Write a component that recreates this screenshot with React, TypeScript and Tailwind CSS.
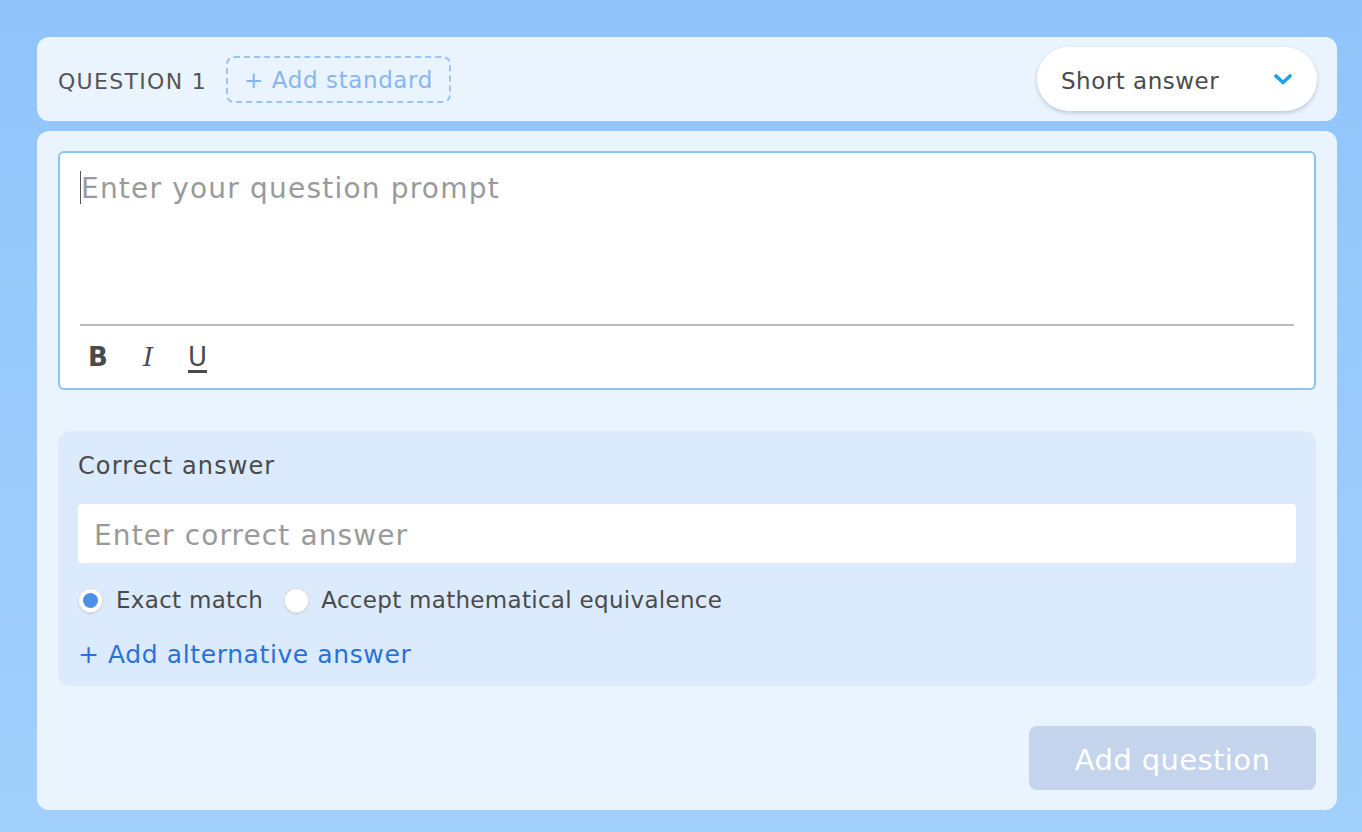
const FONT = { fontFamily: '"DejaVu Sans", Verdana, sans-serif' }

function Radio({ checked }: { checked?: boolean }) {
  return (
    <span className="h-[25px] w-[25px] shrink-0 rounded-full bg-white shadow-[inset_0_0_0_1px_#dcdcdc,0_1px_2px_rgba(0,0,0,0.12)] flex items-center justify-center">
      {checked && <span className="h-[15px] w-[15px] rounded-full bg-[#4a90e8]" />}
    </span>
  )
}

export default function App() {
  return (
    <div
      className="min-h-[832px] w-full bg-gradient-to-b from-[#90c4fa] to-[#a2d0fc] pl-[37px] pr-[25px] pt-[37px] pb-[22px] flex flex-col gap-[10px]"
      style={FONT}
    >
      {/* Header card */}
      <div className="h-[84px] rounded-[12px] bg-[#eaf4fe] flex items-center pl-[21px] pr-[20px]">
        <span className="pt-[5px] text-[22px] text-[#555] tracking-[1.3px]">QUESTION 1</span>
        <button className="ml-[19px] h-[47px] w-[225px] pt-[3px] rounded-[8px] border-2 border-dashed border-[#9cc3f2] text-[23px] tracking-[0.6px] text-[#8ab6f0]">
          + Add standard
        </button>
        <div className="ml-auto h-[64px] w-[280px] rounded-full bg-white shadow-[0_2px_4px_rgba(0,0,0,0.18)] flex items-center pl-[24px] pr-[25px]">
          <span className="pt-[4px] text-[23px] tracking-[0.5px] text-[#4a4a4a]">Short answer</span>
          <svg className="ml-auto" width="18" height="11" viewBox="0 0 18 11" fill="none">
            <polyline points="2,2 9,8.5 16,2" stroke="#1aa2f0" strokeWidth="3.6" strokeLinecap="round" strokeLinejoin="round" />
          </svg>
        </div>
      </div>

      {/* Body card */}
      <div className="rounded-[12px] bg-[#eaf4fe] px-[21px] pt-[20px] pb-[20px] flex flex-col">
        <div className="h-[239px] rounded-[6px] border-2 border-[#8ec1f5] bg-white flex flex-col px-[20px]">
          <div className="flex-1 pt-[17px] flex items-start">
            <span className="w-px h-[33px] bg-[#555] mt-[1px]" />
            <span className="pt-[2px] text-[28px] tracking-[1.2px] text-[#9a9a9a] leading-[34px]">Enter your question prompt</span>
          </div>
          <div className="h-[64px] border-t-2 border-[#bbb] flex items-center pl-[8px] text-[26px] text-[#4a4a4a]">
            <span className="font-bold w-[24px]">B</span>
            <span className="ml-[31px] italic w-[16px]" style={{ fontFamily: '"DejaVu Serif", serif' }}>I</span>
            <span className="ml-[29px] underline underline-offset-[4px] decoration-[2.5px]">U</span>
          </div>
        </div>

        <div className="mt-[41px] rounded-[12px] bg-[#dbeafd] px-[20px] pt-[20px] pb-[15px]">
          <div className="text-[24px] tracking-[1.1px] text-[#4a4a4a] leading-[30px]">Correct answer</div>
          <div className="mt-[23px] h-[59px] pt-[5px] rounded-[4px] bg-white flex items-center pl-[16px] text-[28px] tracking-[1.1px] text-[#9a9a9a]">
            Enter correct answer
          </div>
          <div className="mt-[22px] h-[30px] flex items-center text-[23px] tracking-[0.3px] text-[#4a4a4a]">
            <Radio checked />
            <span className="ml-[13px]">Exact match</span>
            <span className="ml-[21px]">
              <Radio />
            </span>
            <span className="ml-[12px]">Accept mathematical equivalence</span>
          </div>
          <div className="mt-[23px] pt-[1px] text-[25px] tracking-[0.6px] leading-[32px] text-[#2a72d8]">+ Add alternative answer</div>
        </div>

        <div className="mt-[40px] flex justify-end">
          <button className="h-[64px] w-[287px] pt-[5px] rounded-[8px] bg-[#c4d4ec] text-[29px] tracking-[0.4px] text-white">
            Add question
          </button>
        </div>
      </div>
    </div>
  )
}
